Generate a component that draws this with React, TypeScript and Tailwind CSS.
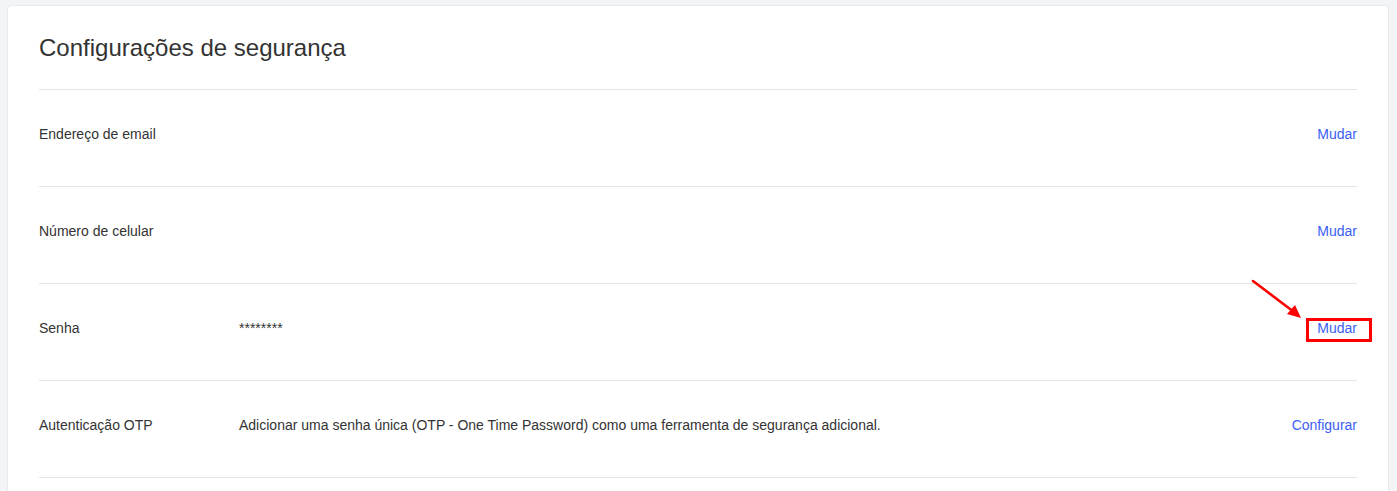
import React from 'react';

const rows = [
  { label: 'Endereço de email', value: '', action: 'Mudar' },
  { label: 'Número de celular', value: '', action: 'Mudar' },
  { label: 'Senha', value: '********', action: 'Mudar', marked: true },
  {
    label: 'Autenticação OTP',
    value: 'Adicionar uma senha única (OTP - One Time Password) como uma ferramenta de segurança adicional.',
    action: 'Configurar',
  },
];

export default function App() {
  return (
    <div className="min-h-screen bg-[#f3f4f6] pt-[5px] pl-[7px] pr-[8px] font-['Liberation_Sans',Arial,sans-serif]">
      <div className="bg-white rounded-[4px] border border-[#e9eaec] px-[31px] pb-[40px]">
        <div className="h-[83px] flex items-center">
          <h1 className="text-[24px] text-[#333] font-normal">Configurações de segurança</h1>
        </div>

        {rows.map((row) => (
          <div
            key={row.label}
            className="relative h-[97px] pb-[8px] border-t border-[#e5e5e5] flex items-center text-[14px] text-[#333]"
          >
            <div className="w-[200px] shrink-0">{row.label}</div>
            <div className="flex-1">{row.value}</div>
            <a href="#" className="text-[#3b5ef5]">
              {row.action}
            </a>

            {row.marked && (
              <>
                {/* annotation arrow + box */}
                <svg
                  className="absolute left-[1207px] top-[-6px]"
                  width="60"
                  height="46"
                  viewBox="0 0 60 46"
                >
                  <line x1="7" y1="3" x2="48" y2="34" stroke="#f00" strokeWidth="2.5" strokeLinecap="round" />
                  <polygon points="55,40 41,36 49,27" fill="#f00" />
                </svg>
                <div className="absolute left-[1267px] top-[34px] w-[66px] h-[24px] border-[3px] border-[#f00]" />
              </>
            )}
          </div>
        ))}
        <div className="border-t border-[#e5e5e5]" />
      </div>
    </div>
  );
}
